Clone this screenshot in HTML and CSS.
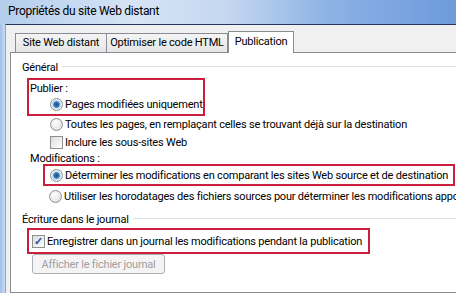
FILE: index.html
```html
<!DOCTYPE html>
<html lang="fr">
<head>
  <meta charset="UTF-8">
  <title>Propriétés du site Web distant</title>
  <link rel="stylesheet" href="styles.css">
</head>
<body>
  <div class="window">
    <!-- Barre de titre -->
    <div class="titlebar">Propriétés du site Web distant</div>

    <div class="body">
      <!-- Onglets -->
      <div class="tabs">
        <div class="tab tab-site">Site Web distant</div>
        <div class="tab tab-html">Optimiser le code HTML</div>
        <div class="tab tab-pub selected">Publication</div>
      </div>

      <div class="panel">
        <div class="group-title"><span>Général</span></div>

        <div class="mark mark-publier">
          <div class="row label">Publier :</div>
          <div class="row indent"><span class="radio checked"></span>Pages modifiées uniquement</div>
        </div>
        <div class="row opt row-toutes"><span class="radio"></span>Toutes les pages, en remplaçant celles se trouvant déjà sur la destination</div>
        <div class="row opt row-inclure"><span class="check"></span>Inclure les sous-sites Web</div>

        <div class="row label-modif">Modifications :</div>
        <div class="mark mark-modif">
          <div class="row"><span class="radio checked"></span>Déterminer les modifications en comparant les sites Web source et de destination</div>
        </div>
        <div class="row opt row-utiliser"><span class="radio"></span>Utiliser les horodatages des fichiers sources pour déterminer les modifications apportées</div>

        <div class="group-title group-journal"><span>Écriture dans le journal</span></div>
        <div class="mark mark-journal">
          <div class="row"><span class="check checked">&#10003;</span>Enregistrer dans un journal les modifications pendant la publication</div>
        </div>
        <button class="button" disabled>Afficher le fichier journal</button>
      </div>
    </div>
  </div>
</body>
</html>
```

FILE: styles.css
```css
/* Styles généraux */
* {
  margin: 0;
  padding: 0;
  box-sizing: border-box;
}

body {
  width: 456px;
  height: 293px;
  overflow: hidden;
  font-family: Roboto, "Noto Sans", sans-serif;
  font-size: 11px;
  letter-spacing: -0.2px;
  color: #000;
}

.window {
  height: 293px;
  background: linear-gradient(90deg, #9fbfe6 0, #c3d8f1 4px);
  display: flex;
  flex-direction: column;
}

/* Barre de titre */
.titlebar {
  height: 24px;
  padding: 4px 0 0 8px;
  font-size: 12px;
  letter-spacing: -0.3px;
  color: #000;
  background: linear-gradient(90deg, #b4cdec 0%, #d6e4f5 30%, #c4d7f0 50%, #8db2e5 72%, #6e9adc 100%);
  white-space: nowrap;
}

.body {
  flex: 1;
  margin-left: 5px;
  background-color: #f0f0f0;
  border-top: 1px solid #25365a;
  border-left: 1px solid #8ea6c8;
  padding-left: 4px;
  display: flex;
  flex-direction: column;
}

/* Onglets */
.tabs {
  display: flex;
  align-items: flex-end;
  padding-left: 5px;
  height: 27px;
}

.tab {
  height: 19px;
  padding-top: 2px;
  text-align: center;
  border: 1px solid #898c95;
  border-bottom: none;
  background: linear-gradient(#f4f4f4, #e6e6e6);
  margin-right: -1px;
  white-space: nowrap;
}

.tab-site {
  width: 92px;
}

.tab-html {
  width: 122px;
}

.tab.selected {
  width: 66px;
  height: 22px;
  margin-bottom: -1px;
  margin-left: 1px;
  padding-top: 3px;
  background: #fff;
  position: relative;
  z-index: 1;
}

.panel {
  flex: 1;
  background: #fff;
  border: 1px solid #898c95;
  border-right: none;
  padding: 7px 0 0 11px;
  white-space: nowrap;
  overflow: hidden;
}

/* Groupes */
.group-title {
  display: flex;
  align-items: center;
  height: 14px;
}

.group-title::after {
  content: "";
  flex: 1;
  border-top: 1px solid #d5dfe5;
  border-bottom: 1px solid #fff;
  margin-left: 4px;
}

.group-journal {
  margin-top: 7px;
}

.row {
  display: flex;
  align-items: center;
  height: 16px;
}

.label {
  padding-left: 1px;
}

.indent {
  padding-left: 21px;
}

.opt {
  padding-left: 28px;
}

.row-toutes {
  height: 16px;
}

.row-inclure {
  height: 19px;
  padding-top: 1px;
}

.label-modif {
  padding-left: 8px;
  height: 14px;
}

.row-utiliser {
  height: 18px;
  margin-top: 1px;
  padding-left: 27px;
}

/* Encadrés rouges */
.mark {
  border: 2px solid #cc1f3e;
}

.mark-publier {
  width: 178px;
  margin: 4px 0 0 5px;
  padding-bottom: 2px;
}

.mark-modif {
  width: 412px;
  margin: -1px 0 0 21px;
  padding-left: 5px;
}

.mark-modif .row {
  height: 18px;
}

.mark-journal {
  width: 343px;
  margin: 2px 0 0 5px;
  padding-left: 3px;
}

.mark-journal .row {
  height: 22px;
}

/* Contrôles */
.radio {
  width: 13px;
  height: 13px;
  border-radius: 50%;
  border: 1px solid #8e8f8f;
  background: radial-gradient(circle at 40% 35%, #fff, #d8d8d8);
  margin-right: 2px;
  flex: none;
}

.radio.checked {
  background: radial-gradient(circle, #1c5180 0, #2f76b5 2.5px, #9ec4ea 3.5px, #f4f4f4 5px);
}

.check {
  width: 13px;
  height: 13px;
  border: 1px solid #8e8f8f;
  background: linear-gradient(135deg, #dcdcdc, #fff);
  margin-right: 2px;
  flex: none;
  font-size: 11px;
  line-height: 11px;
  text-align: center;
  color: #2b4fa0;
  font-weight: bold;
}

.button {
  display: block;
  margin-left: 10px;
  width: 133px;
  height: 20px;
  font-family: inherit;
  font-size: 11px;
  letter-spacing: -0.2px;
  color: #a0a0a0;
  background: #f4f4f4;
  border: 1px solid #adb2b5;
  border-radius: 3px;
}
```
